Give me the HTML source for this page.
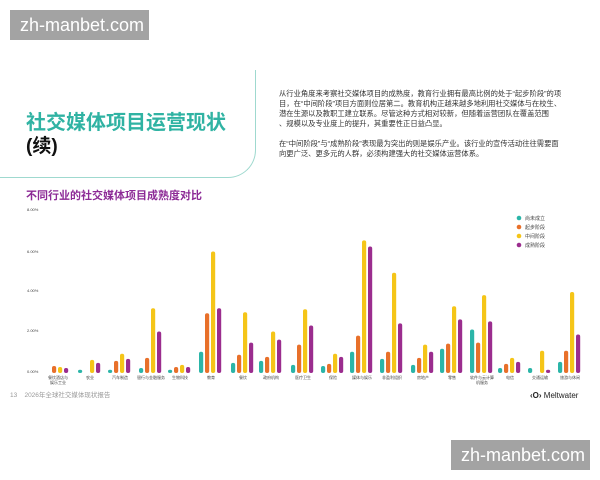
<!DOCTYPE html>
<html><head><meta charset="utf-8"><style>
body{margin:0;width:600px;height:480px;background:#fff;position:relative;overflow:hidden;font-family:"Liberation Sans","Noto Sans CJK SC",sans-serif}
.wm{position:absolute;background:#a3a3a3;color:#fff;font-size:18px;line-height:30px;padding-left:10px;box-sizing:border-box}
.card{position:absolute;left:-20px;top:70px;width:275px;height:107px;border-right:1.5px solid #9fd9cf;border-bottom:1.5px solid #9fd9cf;border-bottom-right-radius:28px}
.t1{position:absolute;left:26px;top:106px;font-size:20px;font-weight:bold;color:#30b3a3;white-space:nowrap}
.t2{position:absolute;left:26px;top:131px;font-size:19px;font-weight:bold;color:#111}
.p{position:absolute;left:279px;font-size:7.3px;line-height:10px;color:#333;white-space:nowrap}
.sub{position:absolute;left:26px;top:187px;font-size:11px;font-weight:bold;color:#8c2a96;white-space:nowrap}
.foot{position:absolute;left:10px;top:389px;font-size:6.5px;color:#999}
</style></head><body>
<div class="card"></div>
<div class="t1">社交媒体项目运营现状</div>
<div class="t2">(续)</div>
<div class="p" style="top:89px">从行业角度来考察社交媒体项目的成熟度，教育行业拥有最高比例的处于“起步阶段”的项<br>目，在“中间阶段”项目方面则位居第二。教育机构正越来越多地利用社交媒体与在校生、<br>潜在生源以及教职工建立联系。尽管这种方式相对较新，但随着运营团队在覆盖范围<br>、规模以及专业度上的提升，其重要性正日益凸显。</div>
<div class="p" style="top:139px">在“中间阶段”与“成熟阶段”表现最为突出的则是娱乐产业。该行业的宣传活动往往需要面<br>向更广泛、更多元的人群，必须构建强大的社交媒体运营体系。</div>
<div class="sub">不同行业的社交媒体项目成熟度对比</div>
<svg style="position:absolute;left:0;top:0" width="600" height="480" font-family="Liberation Sans,Noto Sans CJK SC,sans-serif">
<g font-size="4" fill="#444">
<text x="27" y="211">8.00%</text><text x="27" y="253">6.00%</text><text x="27" y="292">4.00%</text><text x="27" y="332">2.00%</text><text x="27" y="373">0.00%</text>
</g>
<g id="bars"></g>
<g font-size="4" fill="#444" text-anchor="middle" id="labels"></g>
<g font-size="5" fill="#444">
<circle cx="519" cy="218" r="2.3" fill="#2bb5a8"/><text x="525" y="220">尚未成立</text>
<circle cx="519" cy="227" r="2.3" fill="#e8702a"/><text x="525" y="229">起步阶段</text>
<circle cx="519" cy="236" r="2.3" fill="#f5c518"/><text x="525" y="238">中间阶段</text>
<circle cx="519" cy="245" r="2.3" fill="#9b2d8e"/><text x="525" y="247">成熟阶段</text>
</g>
<text x="530" y="398" font-size="8" fill="#222" font-weight="bold">‹O› <tspan font-weight="normal">Meltwater</tspan></text>
</svg>
<div class="foot">13 &nbsp;&nbsp; 2026年全球社交媒体现状报告</div>
<div class="wm" style="left:10px;top:10px;width:139px;height:30px">zh-manbet.com</div>
<div class="wm" style="left:451px;top:440px;width:139px;height:30px">zh-manbet.com</div>
<script>
var c=[58,90,120,151,180,211,243,271,303,333,362,392,423,452,482,510,540,570];
var n=["餐饮酒店与\n娱乐工业","农业","汽车制造","银行与金融服务","生物科技","教育","餐饮","政府机构","医疗卫生","保险","媒体与娱乐","非盈利组织","房地产","零售","软件与云计算\n机服务","电信","交通运输","旅游与休闲"];
var d=[[0,.25,.2,.15],[.05,0,.55,.4],[.05,.5,.85,.6],[.15,.65,3.1,1.95],[.05,.2,.3,.2],[.95,2.85,5.9,3.1],[.4,.8,2.9,1.4],[.5,.7,1.95,1.55],[.3,1.3,3.05,2.25],[.25,.35,.85,.7],[.95,1.75,6.45,6.15],[.6,.95,4.85,2.35],[.3,.65,1.3,.95],[1.1,1.35,3.2,2.55],[2.05,1.4,3.75,2.45],[.15,.35,.65,.45],[.15,0,1,.05],[.45,1,3.9,1.8]];
var col=["#2bb5a8","#e8702a","#f5c518","#9b2d8e"];
var s="",l="";
for(var i=0;i<18;i++){for(var j=0;j<4;j++){var h=d[i][j]*20.25;if(h<1.2)h=h>0?1.2:0;if(!h)continue;var x=c[i]-12+j*6;s+='<rect x="'+x+'" y="'+(371-h)+'" width="4.2" height="'+(h+2)+'" rx="2" fill="'+col[j]+'"/>';}
var t=n[i].split("\n");for(var k=0;k<t.length;k++)l+='<text x="'+c[i]+'" y="'+(379+k*5)+'">'+t[k]+'</text>';}
document.getElementById("bars").innerHTML=s;document.getElementById("labels").innerHTML=l;
</script>
</body></html>
